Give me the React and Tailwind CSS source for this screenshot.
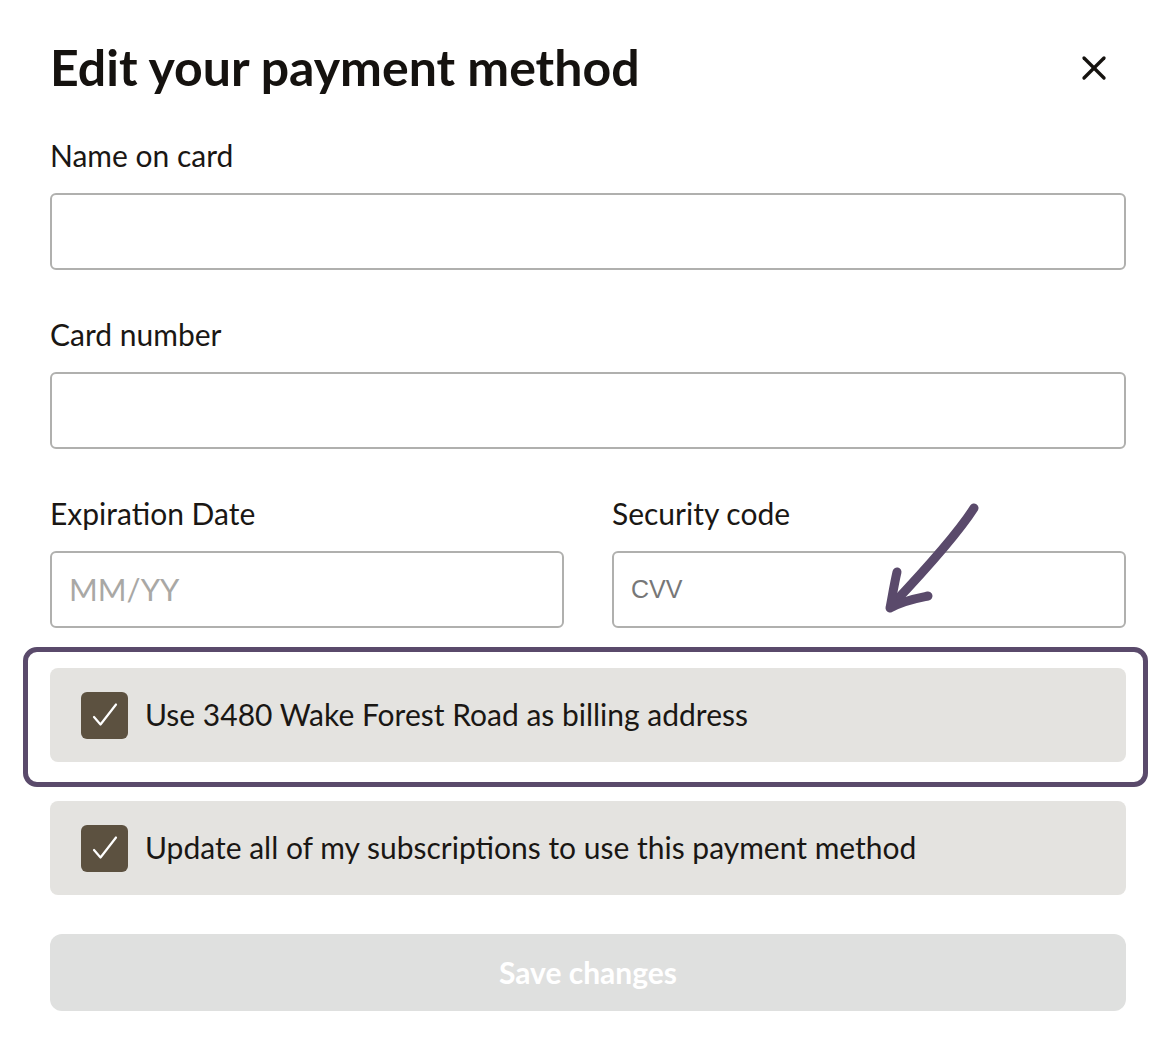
import { X } from 'lucide-react';

const font = { fontFamily: 'Lato, "Open Sans", sans-serif' };

const Field = ({ label, placeholder, placeholderClass = '' }) => (
    <div className="flex flex-col">
        <label className="text-[30px] leading-[36px] text-[#1a1714] mb-[20px]">{label}</label>
        <div className="h-[77px] rounded-[6px] border-2 border-[#b0b0ae] bg-white flex items-center px-[17px]">
            {placeholder && <span className={placeholderClass}>{placeholder}</span>}
        </div>
    </div>
);

const CheckRow = ({ children }) => (
    <div className="h-[94px] rounded-[8px] bg-[#e4e3e0] flex items-center pl-[31px] gap-[17px]">
        <div className="w-[47px] h-[47px] rounded-[6px] bg-[#5c5140] flex items-center justify-center">
            <svg width="36" height="36" viewBox="0 0 36 36" fill="none">
                <path d="M7 20 L13.5 27.5 L29 7.5" stroke="white" strokeWidth="2.2" strokeLinecap="round" strokeLinejoin="round" />
            </svg>
        </div>
        <span className="text-[30px] text-[#1a1714] leading-none pb-[2px]">{children}</span>
    </div>
);

export default function App() {
    return (
        <div className="w-[1168px] h-[1058px] bg-white relative" style={font}>
            <div className="pl-[50px] pr-[42px] pt-[36px] flex flex-col">
                {/* Header */}
                <header className="flex justify-between items-start">
                    <h1 className="text-[50px] leading-[62px] font-bold text-[#15120f]">Edit your payment method</h1>
                    <button className="mt-[12px] mr-[12px] text-[#15120f]">
                        <X className="w-[40px] h-[40px]" strokeWidth={2} />
                    </button>
                </header>

                <div className="mt-[39px] flex flex-col gap-[46px]">
                    <Field label="Name on card" />
                    <Field label="Card number" />
                    <div className="grid grid-cols-2 gap-[48px]">
                        <Field
                            label="Expiration Date"
                            placeholder="MM/YY"
                            placeholderClass="text-[31px] text-[#a9a8a5]"
                        />
                        <Field
                            label="Security code"
                            placeholder="CVV"
                            placeholderClass="text-[25px] text-[#777] font-['Liberation_Sans',sans-serif]"
                        />
                    </div>
                </div>

                {/* Highlighted billing option */}
                <div className="mt-[19px] ml-[-27px] mr-[-22px] border-[5px] border-[#5a4a6b] rounded-[14px] pl-[22px] pr-[17px] pt-[16px] pb-[20px]">
                    <CheckRow>Use 3480 Wake Forest Road as billing address</CheckRow>
                </div>

                <div className="mt-[14px]">
                    <CheckRow>Update all of my subscriptions to use this payment method</CheckRow>
                </div>

                <button className="mt-[39px] h-[77px] rounded-[12px] bg-[#dfe0df] text-white text-[30px] font-bold">
                    Save changes
                </button>
            </div>

            {/* Annotation arrow */}
            <svg className="absolute left-[870px] top-[490px]" width="130" height="140" viewBox="0 0 130 140" fill="none">
                <path d="M104 18 C 90 40, 55 80, 22 115" stroke="#5a4a6b" strokeWidth="9" strokeLinecap="round" />
                <path d="M27 82 C 24 95, 22 108, 20 118 C 35 110, 48 108, 58 106" stroke="#5a4a6b" strokeWidth="9" strokeLinecap="round" strokeLinejoin="round" />
            </svg>
        </div>
    );
}
